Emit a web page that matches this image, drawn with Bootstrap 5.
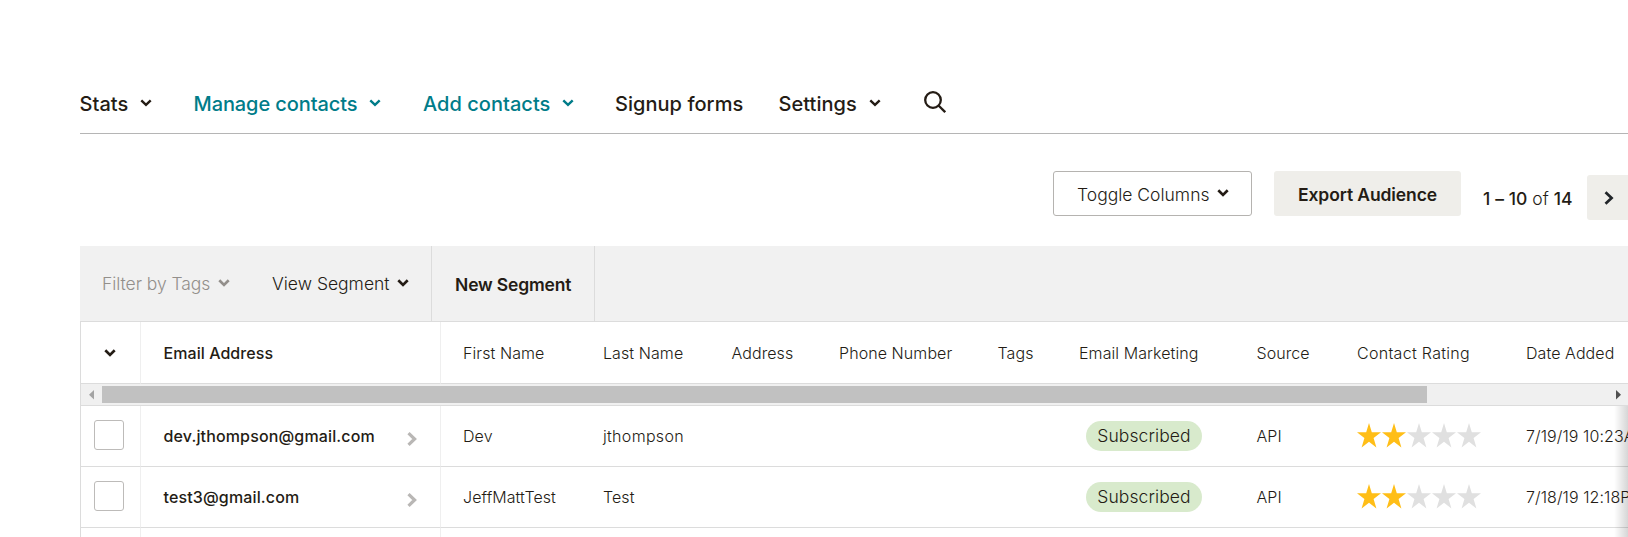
<!DOCTYPE html>
<html lang="en">
<head>
<meta charset="utf-8">
<meta name="viewport" content="width=device-width, initial-scale=1">
<title>Audience</title>
<link href="https://cdn.jsdelivr.net/npm/bootstrap@5.3.0/dist/css/bootstrap.min.css" rel="stylesheet">
<style>
  :root { --ink: #241c15; --teal: #007c89; --rule: #dcdcdc; }
  body { font-family: Inter, "Liberation Sans", sans-serif; color: var(--ink); background: #fff; height: 537px; overflow: hidden; }
  .page { margin-left: 80px; padding-top: 70px; height: 537px; overflow: hidden; }
  svg { display: block; flex: none; }
  .chev { fill: none; stroke: currentColor; stroke-width: 2.7; }

  .audience-nav { height: 64px; border-bottom: 1px solid #b5b5b5; font-size: 20px; font-weight: 500; line-height: 24px; display: grid; grid-template-columns: 114px 229.5px 192px 163.5px 145px auto; padding-top: 22px; letter-spacing: .04px; margin-left: -.5px; }
  .audience-nav a { color: var(--ink); white-space: nowrap; height: 24px; }
  .audience-nav a.text-teal { color: var(--teal); }
  .audience-nav .chev { margin: 0 0 2px 12px; stroke-width: 2.4; }
  .audience-nav .tight { letter-spacing: -.1px; }

  .toolbar { height: 112px; padding-top: 37px; font-size: 17.5px; }
  .tool-btn { height: 45px; border-radius: 3px; font-size: 17.5px; padding: 2px 0 0 23px; color: var(--ink); line-height: 24px; white-space: nowrap; text-align: left; }
  .tool-outline { width: 199px; border: 1px solid #b5b3b0; font-weight: 300; margin-right: 22px; }
  .tool-fill { width: 187px; background: #efeeea; font-weight: 600; letter-spacing: -.1px; border: 0; margin-right: 22px; padding-left: 24px; }
  .pager { width: 104px; padding-top: 15px; line-height: 26px; font-weight: 500; white-space: nowrap; letter-spacing: .1px; }
  .next-btn { width: 41px; height: 45px; margin-top: 4px; padding: 0 0 0 17px; background: #efeeea; border-radius: 3px 0 0 3px; border: 0; }

  .segments { height: 76px; background: #f1f1f1; border-bottom: 1px solid var(--rule); font-size: 17.5px; font-weight: 300; }
  .segments > div { white-space: nowrap; padding-top: 2px; }
  .segments .chev, .tool-outline .chev { margin: 0 0 3px 7.5px; }
  .seg-tags { width: 192px; padding-left: 22px; color: #938f8b; letter-spacing: -.06px; }
  .seg-view { width: 160px; border-right: 1px solid var(--rule); }
  .segments > .seg-new { width: 163px; padding: 4px 0 0 23px; border-right: 1px solid var(--rule); font-weight: 600; letter-spacing: -.16px; }

  .contacts { width: 1620px; table-layout: fixed; border-collapse: separate; border-spacing: 0; border-left: 1px solid var(--rule); font-size: 16px; font-weight: 300; line-height: 24px; letter-spacing: .08px; }
  .contacts th, .contacts td { padding: 0 0 0 22px; border-bottom: 1px solid var(--rule); white-space: nowrap; vertical-align: middle; font-weight: 300; }
  .contacts th { height: 62px; }
  .contacts td { height: 61px; padding-bottom: 1px; }
  .contacts .pick { padding: 0 0 0 13px; border-right: 1px solid #efefef; }
  .contacts td.pick { padding-bottom: 2px; }
  .contacts .email { border-right: 1px solid #efefef; font-weight: 500; letter-spacing: .06px; padding-left: 22.5px; }
  .contacts td.email { letter-spacing: .14px; }
  .contacts .email .chev { color: #b9b7b5; margin: 7px 23px 0 0; stroke-width: 3.2; }
  .contacts .spaced { letter-spacing: .3px; }
  .contacts .hbar { height: 22px; padding: 0; background: #f0f0f0; }
  .contacts .cut td { height: 9px; padding: 0; border-bottom: 0; }
  .hbar .thumb { width: 1325px; height: 17px; background: #c1c1c1; }
  .check { width: 30px; height: 30px; border: 1px solid #bdbbb9; border-radius: 3px; }
  .pill { width: 116px; height: 30px; margin-left: 7px; border-radius: 15px; background: #d8eacc; font-size: 17.5px; }
  .stars { gap: 1px; }
  .stars svg { fill: #e0e0e0; }
  .stars svg.on { fill: #ffbe17; }
  .edge-fade { position: absolute; right: 0; top: 406px; bottom: 0; width: 14px; background: linear-gradient(to right, rgba(0,0,0,0), rgba(0,0,0,.16)); }
</style>
</head>
<body class="position-relative">
<svg width="0" height="0" class="position-absolute">
  <defs>
    <symbol id="down" viewBox="0 0 12 8"><path d="M1.3 1.3 6 5.9l4.7-4.6"/></symbol>
    <symbol id="right" viewBox="0 0 10 14"><path d="M1.5 1.2 7.6 7l-6.1 5.8"/></symbol>
    <symbol id="star" viewBox="0 0 24 25"><path d="m12 0 2.8 9.2H24l-7.4 5.9 2.8 9.5-7.4-5.8-7.4 5.8 2.8-9.5L0 9.2h9.2z"/></symbol>
  </defs>
</svg>

<main class="page">
  <nav class="audience-nav">
    <a class="d-flex align-items-center text-decoration-none">Stats<svg class="chev" width="12" height="8"><use href="#down"/></svg></a>
    <a class="d-flex align-items-center text-decoration-none text-teal tight">Manage contacts<svg class="chev" width="12" height="8"><use href="#down"/></svg></a>
    <a class="d-flex align-items-center text-decoration-none text-teal">Add contacts<svg class="chev" width="12" height="8"><use href="#down"/></svg></a>
    <a class="d-flex align-items-center text-decoration-none">Signup forms</a>
    <a class="d-flex align-items-center text-decoration-none">Settings<svg class="chev" width="12" height="8"><use href="#down"/></svg></a>
    <a aria-label="Search"><svg style="margin-top:-1px" width="22" height="22" viewBox="0 0 22 22" fill="none" stroke="currentColor" stroke-width="2.3"><circle cx="9" cy="9" r="7.8"/><path d="m14.5 14.5 6.7 6.7"/></svg></a>
  </nav>

  <div class="toolbar d-flex align-items-start">
    <button class="btn tool-btn tool-outline d-flex align-items-center ms-auto">Toggle Columns<svg class="chev" width="12" height="8"><use href="#down"/></svg></button>
    <button class="btn tool-btn tool-fill">Export Audience</button>
    <div class="pager">1 – 10 <span class="fw-light">of</span> 14</div>
    <button class="btn next-btn" aria-label="Next page"><svg class="chev" width="10" height="14"><use href="#right"/></svg></button>
  </div>

  <div class="segments d-flex">
    <div class="seg-tags d-flex align-items-center">Filter by Tags<svg class="chev" width="12" height="8"><use href="#down"/></svg></div>
    <div class="seg-view d-flex align-items-center">View Segment<svg class="chev" width="12" height="8"><use href="#down"/></svg></div>
    <div class="seg-new d-flex align-items-center">New Segment</div>
  </div>

  <table class="contacts">
    <colgroup><col style="width:60px"><col style="width:300px"><col style="width:140px"><col style="width:128.5px"><col style="width:107.5px"><col style="width:158.5px"><col style="width:81.5px"><col style="width:177.5px"><col style="width:100.5px"><col style="width:169px"><col></colgroup>
    <thead>
      <tr>
        <th class="pick"><svg class="chev" style="margin-left:10px" width="12" height="8"><use href="#down"/></svg></th>
        <th class="email">Email Address</th><th>First Name</th><th>Last Name</th><th>Address</th><th>Phone Number</th><th>Tags</th><th>Email Marketing</th><th>Source</th><th class="spaced">Contact Rating</th><th>Date Added</th>
      </tr>
    </thead>
    <tbody>
      <tr>
        <td class="hbar" colspan="11">
          <div class="d-flex align-items-center">
            <svg width="21" height="17"><path d="M13 4v9.5L8 8.7z" fill="#a3a3a3"/></svg>
            <div class="thumb"></div>
            <svg width="200" height="17"><path d="M189 4v9.5l5-4.8z" fill="#505050"/></svg>
          </div>
        </td>
      </tr>
      <tr>
        <td class="pick"><div class="check"></div></td>
        <td class="email"><div class="d-flex align-items-center justify-content-between">dev.jthompson@gmail.com<svg class="chev" width="10" height="14"><use href="#right"/></svg></div></td>
        <td>Dev</td><td class="spaced">jthompson</td><td></td><td></td><td></td>
        <td><div class="pill d-flex align-items-center justify-content-center">Subscribed</div></td>
        <td>API</td>
        <td><div class="stars d-flex"><svg class="on" width="24" height="25"><use href="#star"/></svg><svg class="on" width="24" height="25"><use href="#star"/></svg><svg width="24" height="25"><use href="#star"/></svg><svg width="24" height="25"><use href="#star"/></svg><svg width="24" height="25"><use href="#star"/></svg></div></td>
        <td>7/19/19 10:23AM</td>
      </tr>
      <tr>
        <td class="pick"><div class="check"></div></td>
        <td class="email"><div class="d-flex align-items-center justify-content-between">test3@gmail.com<svg class="chev" width="10" height="14"><use href="#right"/></svg></div></td>
        <td>JeffMattTest</td><td>Test</td><td></td><td></td><td></td>
        <td><div class="pill d-flex align-items-center justify-content-center">Subscribed</div></td>
        <td>API</td>
        <td><div class="stars d-flex"><svg class="on" width="24" height="25"><use href="#star"/></svg><svg class="on" width="24" height="25"><use href="#star"/></svg><svg width="24" height="25"><use href="#star"/></svg><svg width="24" height="25"><use href="#star"/></svg><svg width="24" height="25"><use href="#star"/></svg></div></td>
        <td>7/18/19 12:18PM</td>
      </tr>
      <tr class="cut"><td class="pick"></td><td class="email"></td><td colspan="9"></td></tr>
    </tbody>
  </table>
</main>
<div class="edge-fade"></div>
<script src="https://cdn.jsdelivr.net/npm/bootstrap@5.3.0/dist/js/bootstrap.bundle.min.js"></script>
</body>
</html>
